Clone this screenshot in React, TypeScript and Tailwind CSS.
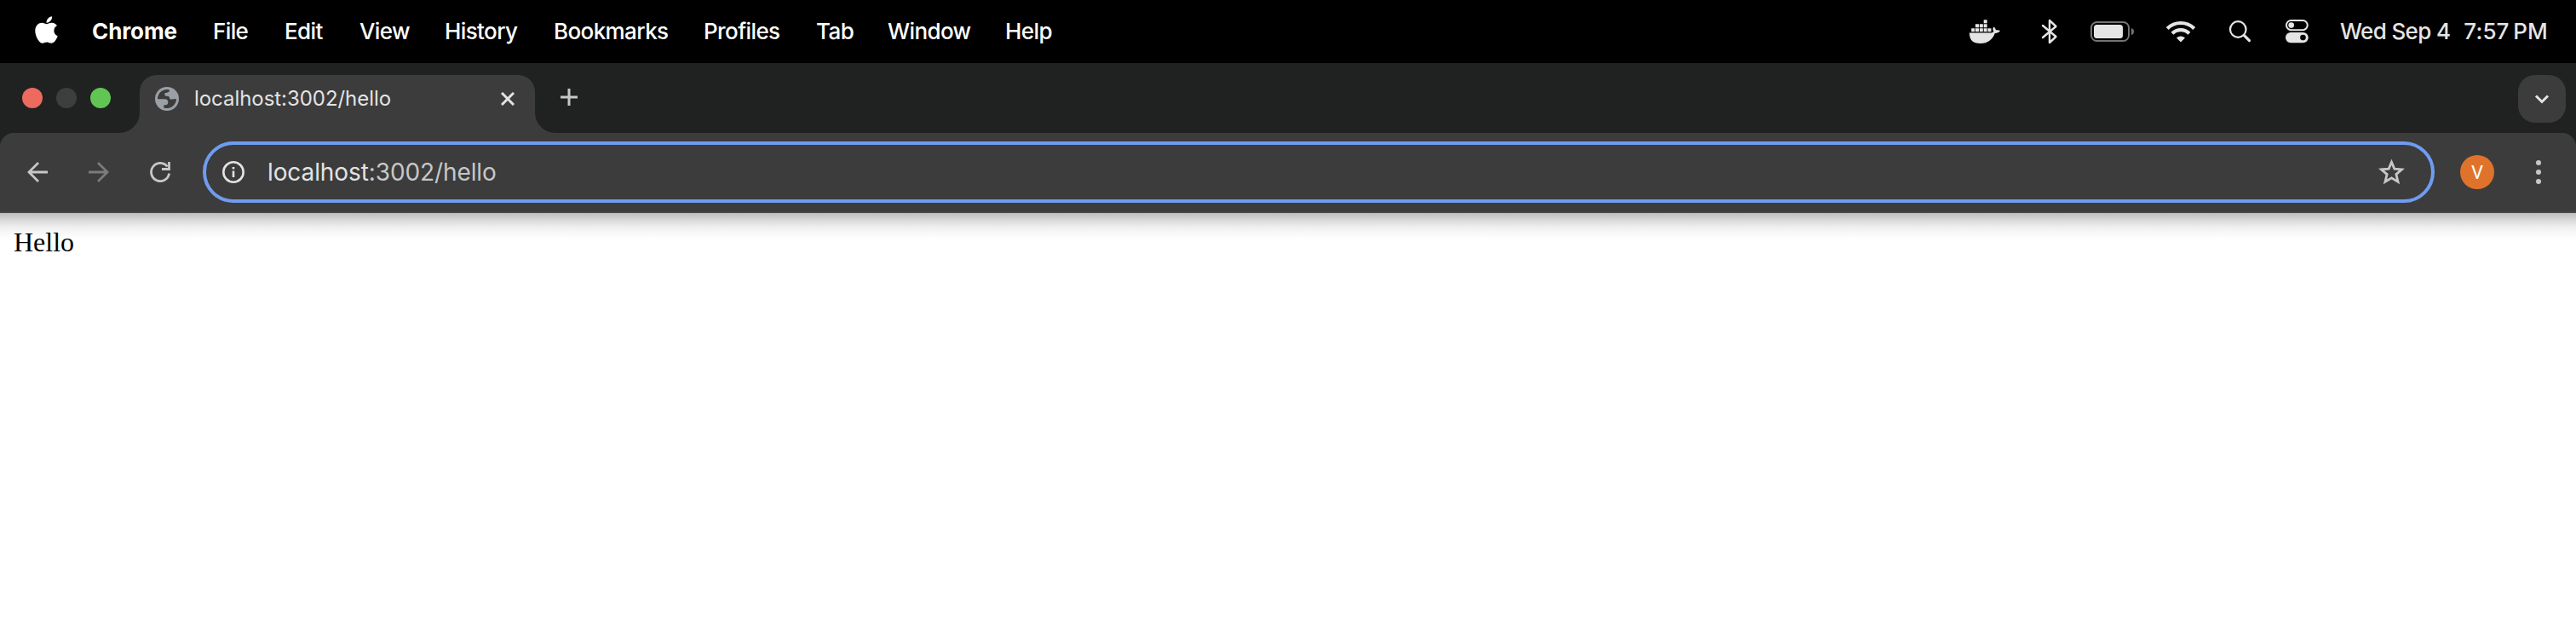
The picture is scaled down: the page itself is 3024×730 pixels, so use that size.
import React from "react";
import { FaApple } from "react-icons/fa";

const menus = [
  { label: "File", box: "w-[84px]" },
  { label: "Edit", box: "w-[88px]" },
  { label: "View", box: "w-[100px]" },
  { label: "History", box: "w-[128px]" },
  { label: "Bookmarks", box: "w-[176px]" },
  { label: "Profiles", box: "w-[132px]" },
  { label: "Tab", box: "w-[84px]" },
  { label: "Window", box: "w-[138px]" },
  { label: "Help", box: "w-[80px]" },
];

function DockerIcon() {
  return (
    <svg className="mb-[1px] h-[28px] w-[36px]" viewBox="0 0 36 28" fill="currentColor">
      <path d="M16.700 0.200h4v4h-4z M7 5.200h4v4h-4z M11.850 5.200h4v4h-4z M16.700 5.200h4v4h-4z M2.200 10.200h4v4h-4z M7 10.200h4v4h-4z M11.850 10.200h4v4h-4z M16.700 10.200h4v4h-4z M21.500 10.200h4v4h-4z" />
      <path d="M0 15.400 H25.500 C27.500 15.300 28.300 14.600 28.200 13.600 C27 11.800 27.300 10 28.500 8.500 C30 9.600 30.800 11 30.900 12.300 C32.600 11.900 34.500 12.200 36 13.100 C35 15.100 32.500 16 29.800 15.900 C27.500 22.500 22 28 12.500 28 C4 28 -0.300 24 0 15.400 Z" />
    </svg>
  );
}

function MenuBar() {
  return (
    <header className="flex h-[74px] items-center bg-black text-[26px] font-medium text-white">
      <FaApple className="mb-[4px] ml-[41px] h-[36px] w-[27px] shrink-0" />
      <span className="mb-[2px] ml-[40px] w-[142px] font-bold tracking-[-0.1px] whitespace-nowrap">Chrome</span>
      {menus.map((m) => (
        <span key={m.label} className={"mb-[2px] shrink-0 tracking-[-0.6px] whitespace-nowrap " + m.box}>
          {m.label}
        </span>
      ))}
      <div className="ml-auto flex h-full items-center text-[#e5e5e5]">
        <DockerIcon />
        <svg className="ml-[48px] h-[32px] w-[20px]" viewBox="0 0 20 32" fill="none" stroke="currentColor" strokeWidth="2.4" strokeLinejoin="round" strokeLinecap="round">
          <path d="M2 9 L17.500 22 L10 29 V3 L17.500 10 L2 23" />
        </svg>
        <svg className="ml-[38px] h-[24px] w-[52px]" viewBox="0 0 52 24">
          <rect x="1" y="1" width="44" height="22" rx="6.500" fill="none" stroke="#737373" strokeWidth="2" />
          <rect x="4" y="4" width="34" height="16" rx="3.500" fill="currentColor" />
          <path d="M48 8 Q51 9 51 12 Q51 15 48 16 Z" fill="#737373" />
        </svg>
        <svg className="ml-[36px] h-[26px] w-[36px]" viewBox="0 0 36 26" fill="none" stroke="currentColor" strokeWidth="4.200">
          <path d="M2.200 9.500 A22.500 22.500 0 0 1 33.800 9.500" />
          <path d="M8 15.300 A14.300 14.300 0 0 1 28 15.300" />
          <path d="M18 25.500 L13 20.500 A7 7 0 0 1 23 20.500 Z" fill="currentColor" stroke="none" />
        </svg>
        <svg className="ml-[38px] h-[28px] w-[28px]" viewBox="0 0 28 28" fill="none" stroke="currentColor" strokeLinecap="round">
          <circle cx="11.300" cy="11.500" r="9.300" strokeWidth="2.200" />
          <path d="M18.500 18.700 L24.500 24.700" strokeWidth="3.200" />
        </svg>
        <svg className="ml-[39px] h-[28px] w-[27px]" viewBox="0 0 27 28">
          <rect x="1" y="1" width="24.800" height="11.200" rx="5.600" fill="none" stroke="currentColor" strokeWidth="2" />
          <circle cx="6.700" cy="6.600" r="3.300" fill="currentColor" />
          <rect x="0" y="15" width="26.800" height="12.200" rx="6.100" fill="currentColor" />
          <circle cx="20.500" cy="21.100" r="3.300" fill="#000" />
        </svg>
        <span className="mb-[2px] ml-[37px] flex w-[277px] gap-[16px] font-medium whitespace-nowrap">
          <span className="tracking-[-0.65px]">Wed Sep 4</span>
          <span className="tracking-[0.1px]">7:57{"\u2009"}PM</span>
        </span>
      </div>
    </header>
  );
}

function TabStrip() {
  return (
    <div className="flex h-[82px] bg-[#202221]">
      <div className="flex w-[140px] items-center gap-[16px] pl-[26px]">
        <i className="size-6 rounded-full bg-[#ed6a5e]" />
        <i className="size-6 rounded-full bg-[#3d3e3e]" />
        <i className="size-6 rounded-full bg-[#61c554]" />
      </div>
      <svg className="h-[24px] w-[24px] self-end" viewBox="0 0 24 24">
        <path d="M24 0 V24 H0 A24 24 0 0 0 24 0 Z" fill="#3c3c3c" />
      </svg>
      <div className="mt-[14px] flex w-[464px] items-center rounded-t-[20px] bg-[#3c3c3c] pr-[24px] pb-[12px] pl-[18px]">
        <svg className="size-7 shrink-0" viewBox="0 0 28 28">
          <circle cx="14" cy="14" r="14" fill="#9aa0a6" />
          <path
            d="M17 3.500 C17 5.800 15.500 6.700 13.500 6.700 C11.800 6.700 11.300 7.500 11.300 8.800 C11.300 10.300 12 10.800 14 10.800 C16.200 10.800 17 12 17.200 13.500 C17.500 14.600 18.500 14.800 20 14.500 L25 14 A11 11 0 0 1 10.300 24.400 V21.300 H12 C14.300 21.300 15.300 20 15.300 18 C15.300 15.500 13.800 14.300 11.500 14.300 H3 A11 11 0 0 1 17 3.500 Z"
            fill="#3c3c3c"
          />
        </svg>
        <span className="ml-[18px] text-[24px] tracking-[-0.05px] text-[#e3e3e3]">localhost:3002/hello</span>
        <svg className="ml-auto size-4" viewBox="0 0 16 16" stroke="#e3e3e3" strokeWidth="3">
          <path d="M1 1 L15 15 M15 1 L1 15" />
        </svg>
      </div>
      <svg className="h-[24px] w-[24px] self-end" viewBox="0 0 24 24">
        <path d="M0 0 V24 H24 A24 24 0 0 1 0 0 Z" fill="#3c3c3c" />
      </svg>
      <svg className="mt-[30px] ml-[6px] size-5" viewBox="0 0 20 20" stroke="#c7c7c7" strokeWidth="3">
        <path d="M10 0 V20 M0 10 H20" />
      </svg>
      <div className="mt-[14px] mr-[12px] ml-auto flex size-14 items-center justify-center rounded-[20px] bg-[#3c3c3c]">
        <svg className="size-5" viewBox="0 0 20 20" fill="none" stroke="#e3e3e3" strokeWidth="3">
          <path d="M3 6.500 L10 13.500 L17 6.500" />
        </svg>
      </div>
    </div>
  );
}

function Toolbar() {
  return (
    <div className="bg-[#202221]">
      <div className="flex h-[94px] items-center rounded-t-[16px] border-b-2 border-[#474545] bg-[#3c3c3c]">
        <svg className="ml-[32px] size-6" viewBox="0 0 24 24" fill="none" stroke="#c7c7c7" strokeWidth="2.800">
          <path d="M24 12 H2 M13 1 L2 12 L13 23" />
        </svg>
        <svg className="ml-[48px] size-6" viewBox="0 0 24 24" fill="none" stroke="#7b7b7b" strokeWidth="2.800">
          <path d="M0 12 H22 M11 1 L22 12 L11 23" />
        </svg>
        <svg className="ml-[48px] size-6" viewBox="0 0 24 24" fill="none" stroke="#c7c7c7" strokeWidth="2.800">
          <path d="M22.600 13.500 A10.600 10.600 0 1 1 20.500 5.500" />
          <path d="M22.500 0 V8.500 H14" />
        </svg>
        <div className="ml-[38px] flex h-[72px] w-[2620px] items-center rounded-full border-4 border-[#709cf0] pr-[31px] pl-[19px]">
          <svg className="size-[26px]" viewBox="0 0 26 26" fill="none" stroke="#e3e3e3" strokeWidth="2.600">
            <circle cx="13" cy="13" r="11.700" />
            <path d="M13 11.500 V19 M13 7 V9.600" />
          </svg>
          <span className="ml-[27px] text-[28px] tracking-[-0.1px] text-[#c7c7c7]">
            <span className="text-[#e3e3e3]">localhost</span>:3002/hello
          </span>
          <svg className="ml-auto h-[30px] w-[31px]" viewBox="0 0 31 30" fill="none" stroke="#c7c7c7" strokeWidth="2.800">
            <path d="M15.500 3.200 L18.800 11.100 L27.600 11.900 L20.900 17.600 L23 26.400 L15.500 21.800 L8 26.400 L10.100 17.600 L3.400 11.900 L12.200 11.100 Z" />
          </svg>
        </div>
        <div className="ml-[30px] flex size-10 items-center justify-center rounded-full bg-[#df732b] font-[Roboto,sans-serif] text-[22px] text-white">V</div>
        <div className="ml-[49px] flex w-[6px] flex-col gap-[5px]">
          <i className="size-[6px] rounded-full bg-[#c7c7c7]" />
          <i className="size-[6px] rounded-full bg-[#c7c7c7]" />
          <i className="size-[6px] rounded-full bg-[#c7c7c7]" />
        </div>
      </div>
    </div>
  );
}

export default function App() {
  return (
    <div className="flex h-[730px] w-[3024px] flex-col overflow-hidden bg-white font-[Inter,sans-serif]">
      <MenuBar />
      <TabStrip />
      <Toolbar />
      <main className="flex-1 bg-[linear-gradient(to_bottom,#bdbdbd_0px,#d8d8d8_8px,#f0f0f0_17px,#ffffff_30px)] pt-[16px] pl-[16px] font-['Liberation_Serif',serif] text-[32px] leading-[37px] text-black">
        Hello
      </main>
    </div>
  );
}
